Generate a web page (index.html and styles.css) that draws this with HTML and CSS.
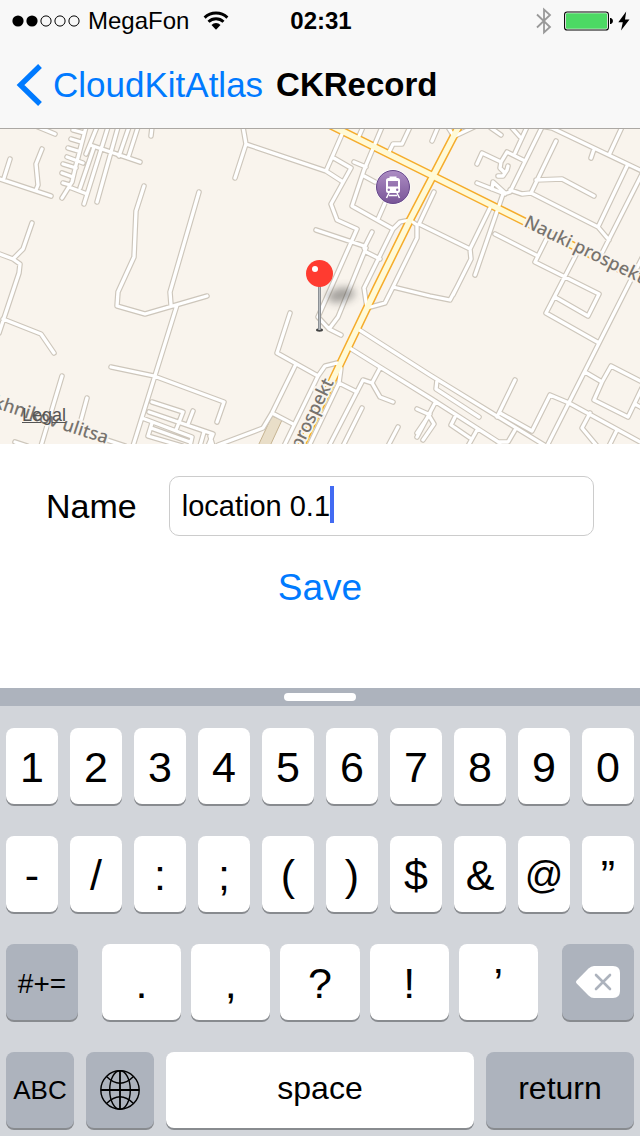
FILE: index.html
```html
<!DOCTYPE html>
<html lang="en">
<head>
<meta charset="utf-8">
<meta name="viewport" content="width=device-width, initial-scale=1">
<title>CKRecord</title>
<link rel="stylesheet" href="styles.css">
</head>
<body class="screen">
<header class="header">
  <div class="status">
    <div class="status-left">
      <svg class="signal" width="68" height="12" viewBox="0 0 68 12" aria-hidden="true">
        <circle cx="6" cy="6" r="5.6"/><circle cx="20" cy="6" r="5.6"/>
        <g fill="none" stroke="#000" stroke-width="1"><circle cx="34" cy="6" r="5.1"/><circle cx="48" cy="6" r="5.1"/><circle cx="62" cy="6" r="5.1"/></g>
      </svg>
      <span>MegaFon</span>
      <svg class="wifi" width="26" height="20" viewBox="0 0 26 20" aria-hidden="true">
        <g fill="none" stroke="#000" stroke-width="2.9"><path d="M1.6 6.600a16.500 16.500 0 0 1 22.800 0"/><path d="M5.500 10.800a10.800 10.800 0 0 1 15 0"/></g>
        <path d="M13 18.800l-4.500-4.900a6.500 6.500 0 0 1 9 0z"/>
      </svg>
    </div>
    <time class="clock">02:31</time>
    <div class="status-right">
      <svg width="16" height="28" viewBox="0 0 16 28" fill="none" stroke="#999" stroke-width="1.8" aria-hidden="true"><path d="M1 7.5l13 12.5-6 5.5v-23l6 5.5L1 20.5"/></svg>
      <svg class="battery" width="50" height="20" viewBox="0 0 50 20" aria-hidden="true">
        <rect x=".6" y="1" width="43.8" height="18" rx="2.6" fill="#fff" stroke="#000" stroke-width="1.1"/>
        <rect x="2" y="2.3" width="41" height="15.4" rx="1" fill="#4cd964"/>
        <path d="M46 7h1q2 1 2 3t-2 3h-1z"/>
      </svg>
      <svg class="bolt" width="12" height="20" viewBox="0 0 12 20" aria-hidden="true"><path d="M8.200 .5L.3 11.200h4.500L3 19.500 11.500 8.400H7z"/></svg>
    </div>
  </div>
  <nav class="nav">
    <a class="back" href="#">
      <svg width="26" height="42" viewBox="0 0 26 42" fill="none" stroke="#007aff" stroke-width="5.400" aria-hidden="true"><path d="M24 2L4.500 21 24 40"/></svg>
      <span>CloudKitAtlas</span>
    </a>
    <h1 class="title">CKRecord</h1>
  </nav>
</header>
<main class="content">
  <div class="map">
    <svg class="map-canvas" viewBox="0 129 640 315" preserveAspectRatio="xMidYMid slice" role="img" aria-label="Map">
      <defs>
        <path id="roads" d="M38 127L55 134M86 127L76 165L72 182L62 198M73 130L84 133M71 139L81 142M68 148L78 151M67 157L83 163M63 164L76 168M62 173L73 177M63 183L70 185M97 127L86 154M90 145L140 162M108 127L84 204M94 147L80 188M69 187L87 194M118 127L97 202M129 127L119 156M138 127L128 158M152 127L151 136
        M0 179L51 196M10 159L4 178M42 149L36 164L38 185L36 190M32 223L23 249L13 259M-3 253L13 259L20 264L19 273L15 285L-1 333M144 186L136 211L134 257L118 292L117 306L145 314L207 296M199 192L170 292L171 305M3 319L41 334L54 353M177 305L133 446M111 367L154 376L224 402L217 422M62 376L41 446M87 398L81 420
        M152 402L183 412L176 430M149 412L213 434L208 446M142 418L192 437L190 446M152 423L148 436L182 446M151 428L190 442M193 411L188 424M204 432L200 446M15 442L27 446M107 440L125 446M210 436L213 446
        M243 127L246 144L235 178M246 144L326 171L343 182M343 132L326 171M332 157L351 168L331 204L337 220L357 229L318 317L329 329L341 335M316 230L364 246M372 232L364 248L366 252L380 259M366 248L338 317L329 329M363 127L359 136M382 127L364 170L352 206L393 229M354 162L366 167M364 176L375 182M385 203L378 219M410 127L402 144L393 144L389 152
        M364 288L393 229L400 222L410 220L417 225L417 238L393 287L385 303L367 308L364 288M434 192L419 224L470 249M393 287L430 296L450 300L458 285M490 208L470 249L471 259L453 295M358 329L430 375L544 445M348 347L380 367L430 398L500 443M380 368L372 383L363 380L329 446M372 383L380 397L393 402M339 383L357 392M362 408L343 446M398 427L388 446
        M417 409L428 414L434 424L423 440M435 403L417 437M430 414L417 433M318 376L325 366L337 363L341 368L339 383L309 446M318 376L284 446M290 313L277 353L318 376M296 364L272 413L263 428L218 445M272 413L293 424
        M438 127L432 141M455 136L474 127M453 135L448 127M491 128L501 135M512 128L520 137M527 127L515 153M542 127L510 192L503 194L475 275M477 164L482 153L501 162L507 152L525 161M501 162L500 168L504 172M508 166L507 170L503 176L498 176M477 183L505 194M492 189L493 182L505 193M510 190L522 194L531 193L598 227L609 240M556 141L531 193M536 180L562 179L594 196M540 126L552 128L642 171M594 149L591 158M622 127L609 155M627 166L598 227M643 172L600 257M495 234L538 256L535 262L599 294L588 316L555 297M547 238L538 256M577 253L546 313L599 343M642 258L547 446
        M437 380L436 389L479 417M515 380L497 417M500 413L532 431L550 395L569 403L642 443M585 372L602 382L594 400L628 417L642 388M602 382L611 366L642 382M635 404L642 408M590 413L582 428L597 446M617 430L609 446M515 430L508 442L498 442M455 417L451 425L470 438M477 430L468 446"/>
        <path id="avenues" d="M332 126L433 176L642 280M459 126L433 176L410 220L377 287L332 381L301 446"/>
        <linearGradient id="station-fill" x1="0" y1="0" x2="0" y2="1"><stop offset="0" stop-color="#ad8dc4"/><stop offset="1" stop-color="#795597"/></linearGradient>
        <linearGradient id="needle-fill"><stop offset="0" stop-color="#777b80"/><stop offset=".5" stop-color="#b8bcc0"/><stop offset="1" stop-color="#74777b"/></linearGradient>
        <filter id="soft" x="-50%" y="-100%" width="200%" height="300%"><feGaussianBlur stdDeviation="4"/></filter>
      </defs>
      <rect y="129" width="640" height="315" fill="#f9f4ed"/>
      <path d="M272 416L282 420L270 446H258z" fill="#e9dec8" stroke="#c5b391"/>
      <g fill="none" stroke-linecap="round" stroke-linejoin="round">
        <use href="#roads" stroke="#cdc6bb" stroke-width="5.600"/>
        <use href="#avenues" stroke="#f5ac2c" stroke-width="8.500"/>
        <use href="#roads" stroke="#fff" stroke-width="3.300"/>
        <use href="#avenues" stroke="#fffad6" stroke-width="5.500"/>
      </g>
      <g class="street">
        <text transform="translate(523 226) rotate(26)">Nauki prospekt</text>
        <text transform="translate(334 382) rotate(-64)" text-anchor="end">prospekt</text>
        <text transform="translate(106 444) rotate(18)" text-anchor="end">khnikov ulitsa</text>
      </g>
      <g transform="translate(393 187)">
        <circle r="17.500" fill="#fff"/>
        <circle r="16.500" fill="url(#station-fill)" stroke="#67478a" stroke-width="1"/>
        <path fill="#fff" fill-rule="evenodd" d="M-3.500-10.500h7v1.500h1q2.500 0 2.500 2.500V4q0 2-2 2h-10q-2 0-2-2v-10.500q0-2.500 2.500-2.500h1zM-5-6v5.500H5V-6zM-4.200 1.500a1.200 1.200 0 1 0 0 2.400 1.200 1.200 0 0 0 0-2.400M4.200 1.500a1.200 1.200 0 1 0 0 2.400 1.200 1.200 0 0 0 0-2.400"/>
        <path d="M-4 6l-2.500 5M4 6l2.500 5M-4 8.500h8" stroke="#fff" stroke-width="1.500"/>
      </g>
      <ellipse cx="341" cy="295" rx="14" ry="7" transform="rotate(-12 341 295)" fill="#333" opacity=".45" filter="url(#soft)"/>
      <ellipse cx="319.500" cy="330" rx="3.500" ry="1.700" fill="#444"/>
      <rect x="318" y="285" width="3" height="45" fill="url(#needle-fill)"/>
      <circle cx="319.500" cy="273.500" r="13.500" fill="#ff3b30"/>
      <circle cx="315" cy="269" r="3" fill="#fff"/>
    </svg>
    <a class="legal" href="#">Legal</a>
  </div>
  <form class="form">
    <div class="row">
      <label class="label" for="name">Name</label>
      <div class="field">
        <input class="input" id="name" type="text" value="location 0.1" autocomplete="off">
        <span class="caret"></span>
      </div>
    </div>
    <button class="save" type="button">Save</button>
  </form>
</main>
<section class="keyboard" aria-label="Keyboard">
  <div class="handle"><span class="grip"></span></div>
  <div class="keys">
    <div class="key-row">
      <button class="key">1</button><button class="key">2</button><button class="key">3</button><button class="key">4</button><button class="key">5</button><button class="key">6</button><button class="key">7</button><button class="key">8</button><button class="key">9</button><button class="key">0</button>
    </div>
    <div class="key-row">
      <button class="key">-</button><button class="key">/</button><button class="key">:</button><button class="key">;</button><button class="key">(</button><button class="key">)</button><button class="key">$</button><button class="key">&amp;</button><button class="key at">@</button><button class="key">”</button>
    </div>
    <div class="key-row punctuation">
      <button class="key dark symbols">#+=</button>
      <div class="key-group">
        <button class="key">.</button><button class="key">,</button><button class="key">?</button><button class="key">!</button><button class="key">’</button>
      </div>
      <button class="key dark icon" aria-label="Delete">
        <svg width="44" height="32" viewBox="0 0 44 32" aria-hidden="true"><path fill="#fff" d="M.7 14.500L12.500 2.500Q15 0 18 0H37q7 0 7 7v18q0 7-7 7H18q-3 0-5.500-2.500L.7 17.500q-1.400-1.500 0-3z"/><path d="M20 9l14 14M34 9L20 23" stroke="#adb3bd" stroke-width="2.600" stroke-linecap="round"/></svg>
      </button>
    </div>
    <div class="key-row bottom">
      <button class="key dark abc">ABC</button>
      <button class="key dark icon" aria-label="Next keyboard">
        <svg width="40" height="40" viewBox="0 0 40 40" fill="none" stroke="#000" stroke-width="1.400" aria-hidden="true"><circle cx="20" cy="20" r="19.200"/><ellipse cx="20" cy="20" rx="10.300" ry="19.200"/><path d="M6.500 6.500Q20 20 33.500 6.500M6.500 33.500Q20 20 33.500 33.500"/><path d="M20 1v38M1 20h38" stroke-width="1.800"/></svg>
      </button>
      <button class="key word">space</button>
      <button class="key dark word">return</button>
    </div>
  </div>
</section>
</body>
</html>
```
FILE: styles.css
```css
* {
  box-sizing: border-box;
}

.screen {
  margin: 0;
  min-height: 100vh;
  display: flex;
  flex-direction: column;
  background: #fff;
  color: #000;
  font-family: "Liberation Sans", Arial, sans-serif;
}

button,
input {
  margin: 0;
  padding: 0;
  border: 0;
  color: inherit;
  font-family: inherit;
}

svg {
  display: block;
  flex: none;
}

.header {
  background: #f8f8f8;
  border-bottom: 1px solid #aba8a4;
}

.status {
  display: grid;
  grid-template-columns: 1fr auto 1fr;
  align-items: center;
  height: 42px;
  padding: 0 10px 0 12px;
  font-size: 24px;
}

.status-left,
.status-right {
  display: flex;
  align-items: center;
}

.status-left {
  gap: 8px;
}

.wifi {
  margin-left: 6px;
}

.status-right {
  justify-content: flex-end;
}

.battery {
  margin: 0 4px 0 12px;
}

.clock {
  font-weight: bold;
}

.nav {
  display: flex;
  align-items: center;
  gap: 13px;
  height: 86px;
  padding: 0 16px;
}

.back {
  display: flex;
  align-items: center;
  gap: 11px;
  color: #007aff;
  font-size: 35px;
  text-decoration: none;
}

.title {
  margin: 0;
  font-size: 33px;
}

.map {
  position: relative;
}

.map-canvas {
  width: 100%;
  height: 315px;
}

.street {
  fill: #77736e;
  stroke: #f9f4ed;
  stroke-width: 4px;
  stroke-linejoin: round;
  paint-order: stroke;
  font-family: "Noto Sans", sans-serif;
  font-size: 18px;
  font-weight: 500;
}

.legal {
  position: absolute;
  left: 22px;
  bottom: 18px;
  color: #555;
  font-size: 18px;
}

.form {
  display: flex;
  flex-direction: column;
  align-items: center;
  gap: 28px;
  padding: 32px 46px;
}

.row {
  display: flex;
  align-items: center;
  gap: 32px;
  width: 100%;
}

.label {
  font-size: 34px;
}

.field {
  position: relative;
  flex: 1;
}

.input {
  display: block;
  width: 100%;
  height: 60px;
  padding: 0 12px;
  border: 1px solid #ccc;
  border-radius: 10px;
  background: #fff;
  font-size: 29px;
  outline: 0;
}

.caret {
  position: absolute;
  left: 161px;
  top: 10px;
  width: 4px;
  height: 37px;
  background: #426bf2;
}

.save {
  background: none;
  color: #007aff;
  font-size: 37px;
  line-height: 48px;
}

.keyboard {
  margin-top: auto;
  background: #d2d5da;
}

.handle {
  display: flex;
  justify-content: center;
  align-items: center;
  height: 18px;
  background: #adb3bd;
}

.grip {
  width: 72px;
  height: 8px;
  border-radius: 4px;
  background: #fff;
}

.keys {
  display: grid;
  gap: 32px;
  padding: 22px 6px 8px;
}

.key-row {
  display: grid;
  grid-template-columns: repeat(10, 1fr);
  gap: 12px;
}

.punctuation {
  grid-template-columns: 72fr 436fr 72fr;
  gap: 24px;
}

.key-group {
  display: grid;
  grid-template-columns: repeat(5, 1fr);
  gap: 10px;
}

.bottom {
  grid-template-columns: 68fr 68fr 308fr 148fr;
}

.key {
  display: flex;
  justify-content: center;
  align-items: center;
  min-width: 0;
  height: 76px;
  padding-top: 3px;
  border-radius: 8px;
  background: #fff;
  box-shadow: 0 2px 0 #888b8f;
  font-size: 43px;
}

.dark {
  background: #adb3bd;
}

.icon {
  padding-top: 0;
}

.at {
  font-size: 38px;
}

.symbols {
  font-size: 28px;
}

.abc {
  padding-top: 0;
  font-size: 26px;
}

.word {
  padding: 0 0 3px;
  font-size: 32px;
}
```
